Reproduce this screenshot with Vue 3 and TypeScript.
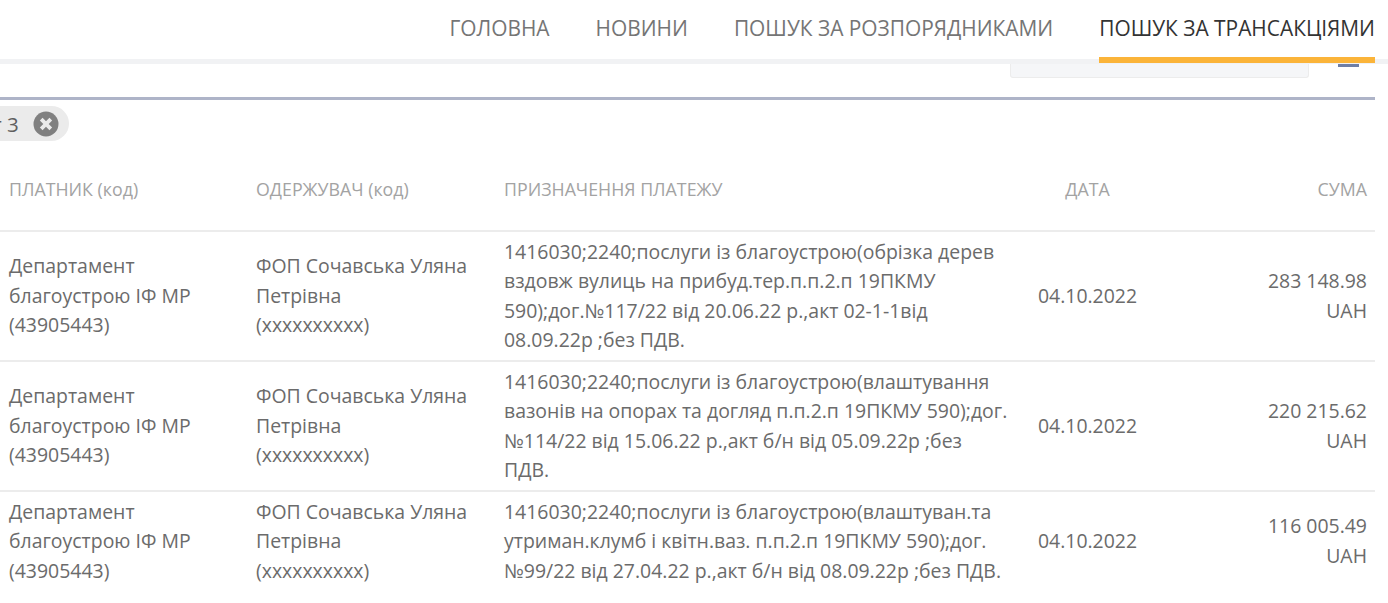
<script setup lang="ts">
const links = [
  { label: "ГОЛОВНА", active: false },
  { label: "НОВИНИ", active: false },
  { label: "ПОШУК ЗА РОЗПОРЯДНИКАМИ", active: false },
  { label: "ПОШУК ЗА ТРАНСАКЦІЯМИ", active: true },
];

const payer = ["Департамент", "благоустрою ІФ МР", "(43905443)"];
const receiver = ["ФОП Сочавська Уляна", "Петрівна", "(xxxxxxxxxx)"];

const rows = [
  {
    purpose: [
      "1416030;2240;послуги із благоустрою(обрізка дерев",
      "вздовж вулиць на прибуд.тер.п.п.2.п 19ПКМУ",
      "590);дог.№117/22 від 20.06.22 р.,акт 02-1-1від",
      "08.09.22р ;без ПДВ.",
    ],
    date: "04.10.2022",
    sum: "283 148.98",
  },
  {
    purpose: [
      "1416030;2240;послуги із благоустрою(влаштування",
      "вазонів на опорах та догляд п.п.2.п 19ПКМУ 590);дог.",
      "№114/22 від 15.06.22 р.,акт б/н від 05.09.22р ;без",
      "ПДВ.",
    ],
    date: "04.10.2022",
    sum: "220 215.62",
  },
  {
    purpose: [
      "1416030;2240;послуги із благоустрою(влаштуван.та",
      "утриман.клумб і квітн.ваз. п.п.2.п 19ПКМУ 590);дог.",
      "№99/22 від 27.04.22 р.,акт б/н від 08.09.22р ;без ПДВ.",
    ],
    date: "04.10.2022",
    sum: "116 005.49",
  },
];
</script>

<template>
  <div class="page">
    <header class="topbar">
      <nav class="nav">
        <a v-for="link in links" :key="link.label" class="nav-link" :class="{ active: link.active }">{{ link.label }}</a>
      </nav>
    </header>

    <section class="tools">
      <div class="search-box"></div>
      <div class="menu-bar"></div>
    </section>

    <div class="filters">
      <span class="chip">
        <span class="chip-text">т 3</span>
        <svg class="chip-close" width="26" height="26" viewBox="0 0 26 26">
          <circle cx="13" cy="13" r="12.5" fill="#808080" />
          <path d="M8.2 8.2l9.6 9.6M17.8 8.2l-9.6 9.6" stroke="#ebebeb" stroke-width="3.8" fill="none" />
        </svg>
      </span>
    </div>

    <table class="table">
      <colgroup>
        <col class="c-payer" />
        <col class="c-receiver" />
        <col class="c-purpose" />
        <col class="c-date" />
        <col class="c-sum" />
      </colgroup>
      <thead>
        <tr>
          <th>ПЛАТНИК (код)</th>
          <th>ОДЕРЖУВАЧ (код)</th>
          <th>ПРИЗНАЧЕННЯ ПЛАТЕЖУ</th>
          <th class="center">ДАТА</th>
          <th class="right">СУМА</th>
        </tr>
      </thead>
      <tbody>
        <tr v-for="row in rows" :key="row.sum">
          <td><div v-for="line in payer" :key="line">{{ line }}</div></td>
          <td><div v-for="line in receiver" :key="line">{{ line }}</div></td>
          <td><div v-for="line in row.purpose" :key="line">{{ line }}</div></td>
          <td class="center">{{ row.date }}</td>
          <td class="right">
            <div>{{ row.sum }}</div>
            <div>UAH</div>
          </td>
        </tr>
      </tbody>
    </table>
  </div>
</template>

<style>
html,
body {
  margin: 0;
  background: #fff;
  overflow: hidden;
}
</style>

<style scoped>
.page {
  width: 1388px;
  height: 603px;
  overflow: hidden;
  font-family: "Open Sans", sans-serif;
  color: #6b6b6b;
}
.topbar {
  height: 59px;
  border-bottom: 5px solid #f1f2f4;
  display: flex;
  justify-content: flex-end;
  padding-right: 13px;
}
.nav {
  display: flex;
  gap: 46px;
  height: 63px;
}
.nav-link {
  font-size: 20.9px;
  line-height: 56px;
  color: #757575;
  white-space: nowrap;
}
.nav-link.active {
  color: #333;
  border-bottom: 6px solid #fbb439;
  box-sizing: border-box;
}
.tools {
  height: 33px;
  margin-right: 13px;
  border-bottom: 3px solid #aeb4c8;
  display: flex;
  justify-content: flex-end;
  align-items: flex-start;
}
.search-box {
  width: 297px;
  height: 13px;
  background: #f5f6f8;
  border: 1px solid #ececec;
  border-top: 0;
  border-radius: 0 0 3px 3px;
  margin-right: 29px;
}
.menu-bar {
  width: 21px;
  height: 3px;
  margin-right: 16px;
  background: #6f7fa6;
}
.filters {
  height: 49px;
  padding-top: 6px;
  box-sizing: border-box;
}
.chip {
  display: inline-flex;
  align-items: center;
  box-sizing: border-box;
  width: 89px;
  height: 35px;
  margin-left: -20px;
  padding-left: 20px;
  background: #ebebeb;
  border-radius: 18px;
  font-size: 20.5px;
  color: #5f5f5f;
}
.chip-text {
  margin-left: -8px;
  white-space: nowrap;
}
.chip-close {
  margin-left: 14px;
}
.table {
  width: 1375px;
  border-collapse: collapse;
  table-layout: fixed;
  font-size: 19.45px;
  line-height: 29.5px;
}
.c-payer { width: 247px; }
.c-receiver { width: 248px; }
.c-purpose { width: 521px; }
.c-date { width: 142px; }
.c-sum { width: 217px; }
th {
  height: 81px;
  padding: 0 8px 0 9px;
  font-size: 17.8px;
  font-weight: 400;
  color: #a3a3a3;
  text-align: left;
  border-bottom: 2px solid #ececec;
}
td {
  padding: 4.5px 8px 5.5px 9px;
  white-space: nowrap;
  vertical-align: middle;
  border-bottom: 2px solid #ececec;
}
tbody tr:last-child td {
  border-bottom: 0;
}
th.center,
td.center {
  text-align: center;
}
th.right,
td.right {
  text-align: right;
}
</style>
